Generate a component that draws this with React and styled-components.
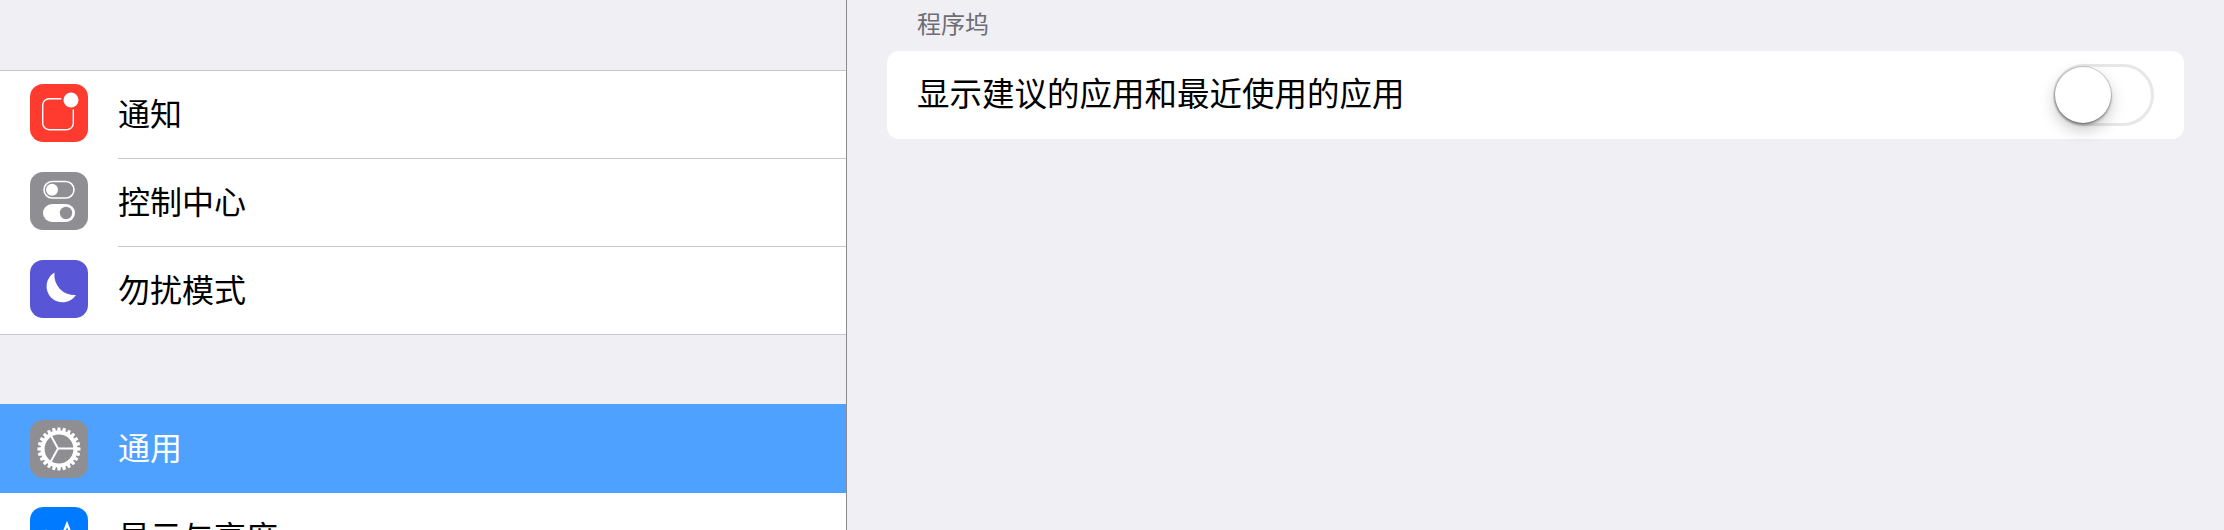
import React from "react";
import styled, { createGlobalStyle } from "styled-components";

const GlobalStyle = createGlobalStyle`
    html, body {
        margin: 0;
        padding: 0;
        height: 530px;
        overflow: hidden;
        background-color: #efeff4;
        font-family: "Noto Sans CJK SC", "Noto Sans", sans-serif;
    }
`;

const Page = styled.div`
    display: flex;
    width: 2224px;
    height: 530px;
    overflow: hidden;
    background-color: #efeff4;
`;

const Sidebar = styled.div`
    width: 846px;
    flex-shrink: 0;
    padding-top: 70px;
    border-right: 1px solid #8a8a8e;
`;

const Group = styled.div`
    background-color: white;
    border-top: ${(p) => (p.$flush ? "none" : "1px solid #c8c7cc")};
    border-bottom: ${(p) => (p.$flush ? "none" : "1px solid #c8c7cc")};
    margin-bottom: ${(p) => (p.$flush ? "0" : "69px")};
`;

const Row = styled.div`
    display: flex;
    align-items: center;
    box-sizing: border-box;
    height: ${(p) => (p.$active ? "89px" : "87px")};
    padding-left: 30px;
    padding-bottom: ${(p) => p.$lift || 0}px;
    background-color: ${(p) => (p.$active ? "#4fa1ff" : "white")};
    color: ${(p) => (p.$active ? "white" : "black")};
    font-size: 32px;
    line-height: 44px;
`;

const RowText = styled.span`
    padding-bottom: ${(p) => (p.$active ? "5px" : "3px")};
`;

const Separator = styled.div`
    height: 1px;
    margin-left: 118px;
    background-color: #c8c7cc;
`;

const IconBox = styled.div`
    width: 58px;
    height: 58px;
    flex-shrink: 0;
    margin-right: 30px;
    border-radius: 13px;
    background-color: ${(p) => p.$color};
    overflow: hidden;
    svg {
        display: block;
    }
`;

const Panel = styled.div`
    flex: 1;
    padding: 0 40px 0 40px;
`;

const SectionLabel = styled.div`
    height: 51px;
    padding-left: 30px;
    color: #6d6d72;
    font-size: 24px;
    line-height: 45px;
`;

const Card = styled.div`
    display: flex;
    align-items: center;
    justify-content: space-between;
    height: 88px;
    padding: 0 30px 0 30px;
    border-radius: 12px;
    background-color: white;
    color: black;
    font-size: 32.5px;
`;

const CardText = styled.span`
    padding-bottom: 8px;
`;

const Track = styled.div`
    display: flex;
    align-items: center;
    box-sizing: border-box;
    width: 101px;
    height: 62px;
    border: 3px solid #e7e7ea;
    border-radius: 31px;
    background-color: white;
`;

const Knob = styled.div`
    width: 56px;
    height: 56px;
    margin-left: -1px;
    border-radius: 50%;
    background-color: white;
    box-shadow: 0 0 0 1px rgba(0, 0, 0, 0.14), 0 2px 3px rgba(0, 0, 0, 0.32), 0 7px 16px rgba(0, 0, 0, 0.22);
`;

function NotificationIcon() {
    return (
        <svg width="58" height="58" viewBox="0 0 58 58">
            <rect x="12.7" y="14.7" width="30.6" height="31" rx="6.5" fill="none" stroke="white" strokeWidth="1.4" />
            <circle cx="41" cy="16" r="10" fill="#ff3b30" />
            <circle cx="41" cy="16" r="7.5" fill="white" />
        </svg>
    );
}

function ControlIcon() {
    return (
        <svg width="58" height="58" viewBox="0 0 58 58">
            <rect x="14" y="9.5" width="30" height="16.5" rx="8.25" fill="none" stroke="white" strokeWidth="1.6" />
            <circle cx="22" cy="17.7" r="6" fill="white" />
            <rect x="13" y="32" width="32" height="18" rx="9" fill="white" />
            <circle cx="36" cy="41" r="6.2" fill="#8e8e93" />
        </svg>
    );
}

function MoonIcon() {
    return (
        <svg width="58" height="58" viewBox="0 0 58 58">
            <path d="M24.5 12.5 A16 16 0 1 0 46 35 A20 20 0 0 1 24.5 12.5 Z" fill="white" />
        </svg>
    );
}

function GearIcon() {
    const teeth = Array.from({ length: 24 }, (_, i) => i * 15);
    return (
        <svg width="58" height="58" viewBox="0 0 58 58">
            {teeth.map((deg) => (
                <path key={deg} d="M26.9 13 L27.6 7.5 L30.4 7.5 L31.1 13 Z" fill="white" transform={`rotate(${deg} 29 29)`} />
            ))}
            <circle cx="29" cy="29" r="16.4" fill="none" stroke="white" strokeWidth="4" />
            <path d="M28 28.5 L46 28.5 M28 28.5 L20 14 M28 28.5 L20 43" stroke="white" strokeWidth="2" fill="none" />
        </svg>
    );
}

function DisplayIcon() {
    return (
        <svg width="58" height="58" viewBox="0 0 58 58">
            <path d="M28 40 L37 17 L46 40" fill="none" stroke="white" strokeWidth="2.4" />
            <path d="M10 40 L16 25 L22 40" fill="none" stroke="white" strokeWidth="2.2" />
        </svg>
    );
}

export default function App() {
    return (
        <>
            <GlobalStyle />
            <Page>
                <Sidebar>
                    <Group>
                        <Row $lift={3}>
                            <IconBox $color="#ff3b30"><NotificationIcon /></IconBox>
                            <RowText>通知</RowText>
                        </Row>
                        <Separator />
                        <Row $lift={3}>
                            <IconBox $color="#8e8e93"><ControlIcon /></IconBox>
                            <RowText>控制中心</RowText>
                        </Row>
                        <Separator />
                        <Row $lift={3}>
                            <IconBox $color="#5856d6"><MoonIcon /></IconBox>
                            <RowText>勿扰模式</RowText>
                        </Row>
                    </Group>
                    <Group $flush>
                        <Row $active>
                            <IconBox $color="#8e8e93"><GearIcon /></IconBox>
                            <RowText $active>通用</RowText>
                        </Row>
                        <Row $lift={1}>
                            <IconBox $color="#007aff"><DisplayIcon /></IconBox>
                            <RowText>显示与亮度</RowText>
                        </Row>
                    </Group>
                </Sidebar>
                <Panel>
                    <SectionLabel>程序坞</SectionLabel>
                    <Card>
                        <CardText>显示建议的应用和最近使用的应用</CardText>
                        <Track>
                            <Knob />
                        </Track>
                    </Card>
                </Panel>
            </Page>
        </>
    );
}
